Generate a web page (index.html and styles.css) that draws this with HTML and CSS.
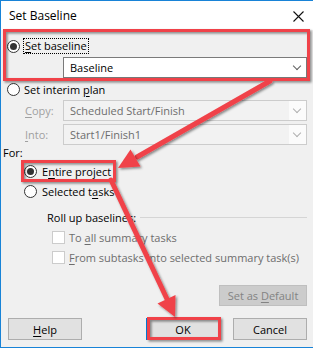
FILE: index.html
```html
<!DOCTYPE html>
<html>
<head>
    <title>Set Baseline</title>
    <link rel="stylesheet" href="styles.css">
</head>
<body>
    <div class="dialog">
        <div class="titlebar">
            <span class="title">Set Baseline</span>
            <svg class="close" width="11" height="11" viewBox="0 0 11 11">
                <path d="M0.5 0.5 L10.5 10.5 M10.5 0.5 L0.5 10.5" stroke="#111" stroke-width="1.1" fill="none"/>
            </svg>
        </div>

        <div class="content">
            <div class="row first">
                <span class="radio checked"></span>
                <span class="focus"><u>S</u>et baseline</span>
            </div>
            <div class="combo">
                <span class="combo-text">Baseline</span>
                <span class="chevron"></span>
            </div>

            <div class="row interim">
                <span class="radio"></span>
                <span>Set interim <u>p</u>lan</span>
            </div>
            <div class="field copy">
                <span class="field-label"><u>C</u>opy:</span>
                <div class="combo disabled">
                    <span class="combo-text">Scheduled Start/Finish</span>
                    <span class="chevron"></span>
                </div>
            </div>
            <div class="field into">
                <span class="field-label"><u>I</u>nto:</span>
                <div class="combo disabled">
                    <span class="combo-text">Start1/Finish1</span>
                    <span class="chevron"></span>
                </div>
            </div>

            <div class="for-label">For:</div>
            <div class="row sub">
                <span class="radio checked"></span>
                <span>E<u>n</u>tire project</span>
            </div>
            <div class="row sub">
                <span class="radio"></span>
                <span>Selected t<u>a</u>sks</span>
            </div>

            <div class="rollup">
                <span>Roll up baselines:</span>
                <span class="rule"></span>
            </div>
            <div class="row check">
                <span class="checkbox"></span>
                <span>To <u>a</u>ll summary tasks</span>
            </div>
            <div class="row check">
                <span class="checkbox"></span>
                <span><u>F</u>rom subtasks into selected summary task(s)</span>
            </div>

            <div class="default-row">
                <button class="btn" disabled>Set as <u>D</u>efault</button>
            </div>

            <div class="buttons">
                <button class="btn"><u>H</u>elp</button>
                <div class="button-group">
                    <button class="btn primary">OK</button>
                    <button class="btn">Cancel</button>
                </div>
            </div>
        </div>

        <svg class="annotations" width="313" height="349" viewBox="0 0 313 349">
            <defs>
                <filter id="shade" x="-20%" y="-20%" width="140%" height="140%">
                    <feDropShadow dx="1.5" dy="1.5" stdDeviation="1.2" flood-color="#000" flood-opacity="0.45"/>
                </filter>
            </defs>
            <g filter="url(#shade)" fill="none" stroke="#f0434a">
                <rect x="4.5" y="30.5" width="304" height="49" stroke-width="3"/>
                <rect x="22.5" y="161.5" width="92" height="19" stroke-width="3"/>
                <rect x="148.5" y="318.5" width="71" height="20" stroke-width="3"/>
                <line x1="270" y1="81" x2="137" y2="157" stroke-width="5" stroke-linecap="round"/>
                <line x1="111" y1="180" x2="167" y2="299" stroke-width="5" stroke-linecap="round"/>
            </g>
            <g filter="url(#shade)" fill="#f0434a">
                <polygon points="118,168 140.5,166.5 130.5,149.5"/>
                <polygon points="175,317 157.5,303.5 175.5,295"/>
            </g>
        </svg>
    </div>
</body>
</html>
```

FILE: styles.css
```css
body {
    margin: 0;
    background: #ffffff;
    font-family: "Open Sans", "Noto Sans", sans-serif;
    font-size: 11px;
    color: #000;
}

.dialog {
    position: relative;
    width: 313px;
    height: 348px;
    background: #f0f0f0;
    border-top: 1px solid #1883d7;
    border-left: 1px solid #1883d7;
    border-bottom: 1px solid #1883d7;
    box-sizing: border-box;
    overflow: hidden;
}

.titlebar {
    height: 29px;
    background: #ffffff;
    display: flex;
    align-items: center;
    justify-content: space-between;
    padding: 0 9px 0 8px;
    font-size: 12px;
}

.close {
    margin-top: 1px;
}

.content {
    padding: 0 6px 0 6px;
}

.row {
    display: flex;
    align-items: center;
    height: 20px;
    gap: 4px;
}

.row.first {
    margin-top: 6px;
}

.row.interim {
    margin-top: 1px;
}

.row.sub {
    padding-left: 17px;
    gap: 5px;
}

.radio {
    width: 11px;
    height: 11px;
    border: 1px solid #333;
    border-radius: 50%;
    background: #fff;
    display: flex;
    align-items: center;
    justify-content: center;
    flex-shrink: 0;
}

.radio.checked::after {
    content: "";
    width: 7px;
    height: 7px;
    border-radius: 50%;
    background: #333;
}

.focus {
    outline: 1px dotted #000;
    outline-offset: 0;
    padding: 0 1px;
    line-height: 14px;
}

u {
    text-decoration-thickness: 1px;
    text-underline-offset: 2px;
}

.combo {
    display: flex;
    align-items: center;
    justify-content: space-between;
    box-sizing: border-box;
    height: 21px;
    width: 244px;
    margin-left: 56px;
    margin-top: 1px;
    border: 1px solid #7a7a7a;
    background: #fff;
    padding: 0 0 0 6px;
}

.chevron {
    width: 17px;
    height: 19px;
    position: relative;
}

.chevron::after {
    content: "";
    position: absolute;
    left: 5px;
    top: 5px;
    width: 5px;
    height: 5px;
    border-right: 1px solid #606060;
    border-bottom: 1px solid #606060;
    transform: rotate(45deg);
}

.field {
    display: flex;
    align-items: center;
    margin-top: 1px;
}

.field.into {
    margin-top: 3px;
}

.field-label {
    width: 56px;
    padding-left: 18px;
    box-sizing: border-box;
    color: #a0a0a0;
}

.field .combo {
    margin: 0;
}

.combo.disabled {
    border-color: #cccccc;
    background: #f2f2f2;
    color: #6d6d6d;
}

.combo.disabled .chevron {
    background: #fbfbfb;
}

.combo.disabled .chevron::after {
    border-color: #b0b0b0;
}

.for-label {
    margin-left: -4px;
    height: 16px;
    line-height: 16px;
}

.rollup {
    display: flex;
    align-items: center;
    gap: 4px;
    height: 18px;
    margin-top: 7px;
    padding-left: 40px;
}

.rule {
    flex: 1;
    height: 1px;
    background: #d5d5d5;
}

.row.check {
    padding-left: 45px;
    height: 19px;
    gap: 4px;
    color: #6d6d6d;
}

.row.check + .row.check {
    height: 20px;
}

.rollup + .row.check {
    margin-top: 2px;
}

.checkbox {
    width: 11px;
    height: 11px;
    border: 1px solid #cccccc;
    background: #fff;
    flex-shrink: 0;
}

.default-row {
    display: flex;
    justify-content: flex-end;
    margin-top: 18px;
}

.btn {
    font-family: inherit;
    font-size: 11px;
    color: #000;
    background: #e1e1e1;
    border: 1px solid #adadad;
    height: 22px;
    width: 74px;
    padding: 0;
}

.btn:disabled {
    width: 88px;
    height: 21px;
    background: #cccccc;
    border-color: #bfbfbf;
    color: #838383;
}

.btn.primary {
    border: 1px solid #0078d7;
    box-shadow: inset 0 0 0 1px #0078d7;
}

.buttons {
    display: flex;
    justify-content: space-between;
    margin-top: 12px;
    padding-left: 1px;
}

.button-group {
    display: flex;
    gap: 13px;
}

.annotations {
    position: absolute;
    left: -1px;
    top: -1px;
    pointer-events: none;
}
```
